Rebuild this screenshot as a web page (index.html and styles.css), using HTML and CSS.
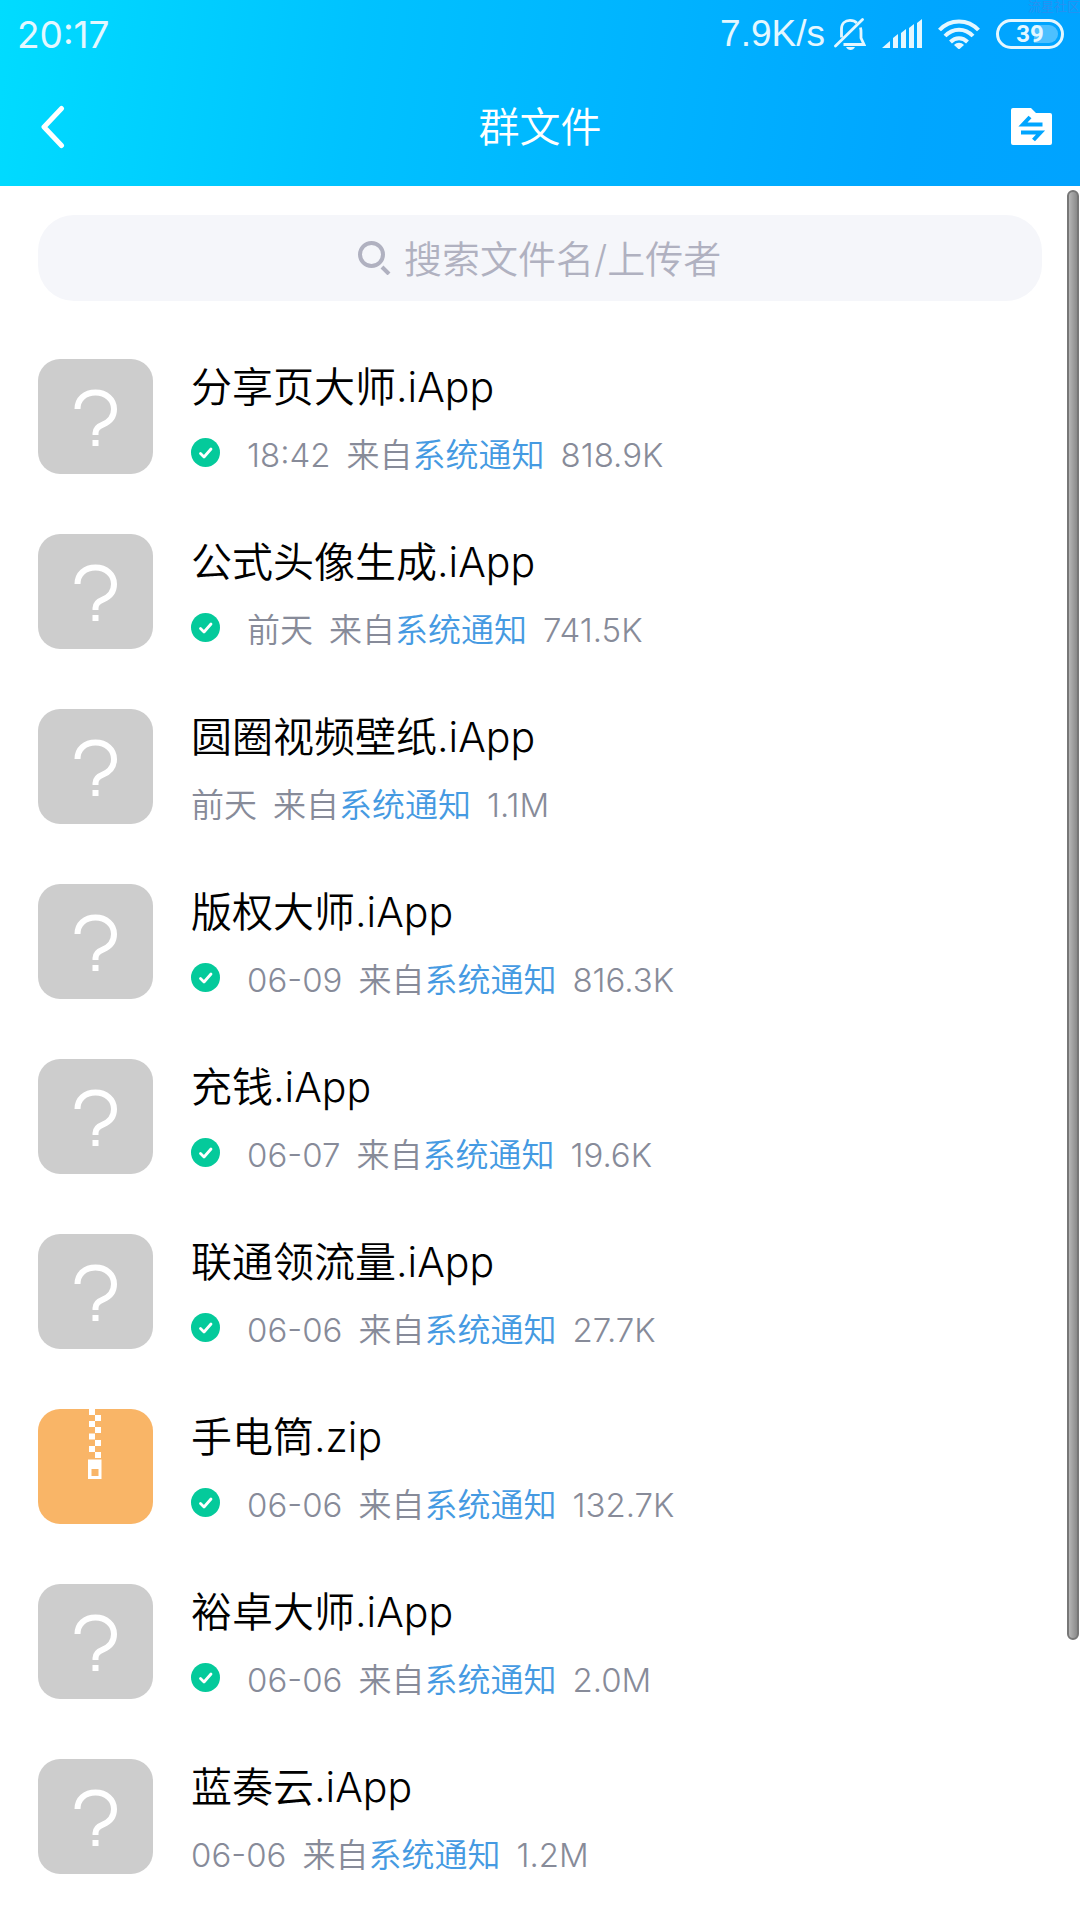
FILE: index.html
```html
<!DOCTYPE html>
<html lang="zh-CN">
<head>
<meta charset="utf-8">
<meta name="viewport" content="width=device-width, initial-scale=1">
<title>群文件</title>
<link rel="stylesheet" href="styles.css">
</head>
<body>
<svg class="defs" aria-hidden="true">
  <symbol id="unknown" viewBox="0 0 115 115">
    <path d="M39.500 50C39.500 40 47 33.500 57.500 33.500S76 40.500 76 50C76 58 71 63 65 65.500C60 67.500 57.500 70 57.500 74V76" fill="none" stroke="#fff" stroke-width="6"/>
    <path d="M54.500 81h6v6h-6z" fill="#fff"/>
  </symbol>
  <symbol id="zip" viewBox="0 0 115 115">
    <path fill="#fff" fill-rule="evenodd" d="M51 0h6v6h-6zM57 6h6v6h-6zM51 12h6v6h-6zM57 18h6v6h-6zM51 24.500h6v6h-6zM57 31h6v6h-6zM51 37h6v6h-6zM57 43h6v6h-6zM50 50.500h13.500V70H50zM53.500 60v7h7v-7z"/>
  </symbol>
  <symbol id="check" viewBox="0 0 29 29">
    <circle cx="14.500" cy="14.500" r="14.500" fill="#04ca9b"/>
    <path d="M9.500 15.500l3.500 3.500 7-8" fill="none" stroke="#fff" stroke-width="2.800" stroke-linecap="round" stroke-linejoin="round"/>
  </symbol>
</svg>

<header class="header">
  <div class="status">
    <span class="clock">20:17</span>
    <div class="indicators">
      <span class="speed">7.9K/s</span>
      <svg class="mute" viewBox="0 0 32 32" fill="none" stroke="currentColor" stroke-width="2.800">
        <path d="M7.500 19.500V11C7.500 5.500 11 2.400 16 2.400c3 0 5.400 1 6.800 2.600M26.500 9.500c.4 1.500.5 3 .5 5V20l3 6.500H9.500"/>
        <path d="M1.500 28L28.500 1.500" stroke-linecap="round"/>
        <path d="M12 29h9c-1 2-2.500 3-4.500 3S13 31 12 29z" fill="currentColor" stroke="none"/>
      </svg>
      <svg class="signal" viewBox="0 0 41 30" fill="currentColor">
        <path d="M0 29l8-7v7zM11 19l5-4v14h-5zM19 14l5-4v19h-5zM27 9l5-4v24h-5zM35 4l5-4v29h-5z"/>
      </svg>
      <svg class="wifi" viewBox="0 0 42 30" fill="none" stroke="currentColor" stroke-width="4">
        <path d="M1.500 11C12-.5 30-.5 40.500 11M7 17c8-8.500 20-8.500 28 0M12.500 23c5-5 12-5 17 0"/>
        <path d="M16 26c3-3 7-3 10 0l-5 4.500z" fill="currentColor" stroke="none"/>
      </svg>
      <span class="battery">39</span>
    </div>
  </div>
  <nav class="nav">
    <button class="nav-button" type="button" aria-label="返回">
      <svg class="back" viewBox="0 0 24 44"><path d="M20.500 3.500L3 22l17.500 18.500" fill="none" stroke="currentColor" stroke-width="5" stroke-linecap="round" stroke-linejoin="round"/></svg>
    </button>
    <h1 class="title">群文件</h1>
    <button class="nav-button nav-button-end" type="button" aria-label="传输列表">
      <svg class="transfer" viewBox="0 0 41 38">
        <path d="M2 0h18l5 5h14a2 2 0 0 1 2 2v28a2 2 0 0 1-2 2H2a2 2 0 0 1-2-2V2a2 2 0 0 1 2-2z" fill="currentColor"/>
        <path d="M31.500 16.500H12l7-7.500M10 24.500h19.500l-7 7.500" fill="none" stroke="#00a5ff" stroke-width="4"/>
      </svg>
    </button>
  </nav>
  <span class="watermark">流星社区</span>
</header>

<main class="content">
  <label class="search">
    <svg class="search-icon" viewBox="0 0 33 34" fill="none" stroke="currentColor" stroke-width="4"><circle cx="13.500" cy="13.500" r="11.500"/><path d="M24 26l7 7"/></svg>
    <input class="search-input" type="text" placeholder="搜索文件名/上传者" aria-label="搜索文件名/上传者">
  </label>

  <ul class="files">
    <li class="file">
      <svg class="thumb"><use href="#unknown"/></svg>
      <div class="info">
        <a class="name" href="#">分享页大师.iApp</a>
        <div class="meta"><svg class="check"><use href="#check"/></svg><span>18:42</span><span>来自<a href="#">系统通知</a></span><span>818.9K</span></div>
      </div>
    </li>
    <li class="file">
      <svg class="thumb"><use href="#unknown"/></svg>
      <div class="info">
        <a class="name" href="#">公式头像生成.iApp</a>
        <div class="meta"><svg class="check"><use href="#check"/></svg><span>前天</span><span>来自<a href="#">系统通知</a></span><span>741.5K</span></div>
      </div>
    </li>
    <li class="file">
      <svg class="thumb"><use href="#unknown"/></svg>
      <div class="info">
        <a class="name" href="#">圆圈视频壁纸.iApp</a>
        <div class="meta"><span>前天</span><span>来自<a href="#">系统通知</a></span><span>1.1M</span></div>
      </div>
    </li>
    <li class="file">
      <svg class="thumb"><use href="#unknown"/></svg>
      <div class="info">
        <a class="name" href="#">版权大师.iApp</a>
        <div class="meta"><svg class="check"><use href="#check"/></svg><span>06-09</span><span>来自<a href="#">系统通知</a></span><span>816.3K</span></div>
      </div>
    </li>
    <li class="file">
      <svg class="thumb"><use href="#unknown"/></svg>
      <div class="info">
        <a class="name" href="#">充钱.iApp</a>
        <div class="meta"><svg class="check"><use href="#check"/></svg><span>06-07</span><span>来自<a href="#">系统通知</a></span><span>19.6K</span></div>
      </div>
    </li>
    <li class="file">
      <svg class="thumb"><use href="#unknown"/></svg>
      <div class="info">
        <a class="name" href="#">联通领流量.iApp</a>
        <div class="meta"><svg class="check"><use href="#check"/></svg><span>06-06</span><span>来自<a href="#">系统通知</a></span><span>27.7K</span></div>
      </div>
    </li>
    <li class="file">
      <svg class="thumb thumb-zip"><use href="#zip"/></svg>
      <div class="info">
        <a class="name" href="#">手电筒.zip</a>
        <div class="meta"><svg class="check"><use href="#check"/></svg><span>06-06</span><span>来自<a href="#">系统通知</a></span><span>132.7K</span></div>
      </div>
    </li>
    <li class="file">
      <svg class="thumb"><use href="#unknown"/></svg>
      <div class="info">
        <a class="name" href="#">裕卓大师.iApp</a>
        <div class="meta"><svg class="check"><use href="#check"/></svg><span>06-06</span><span>来自<a href="#">系统通知</a></span><span>2.0M</span></div>
      </div>
    </li>
    <li class="file">
      <svg class="thumb"><use href="#unknown"/></svg>
      <div class="info">
        <a class="name" href="#">蓝奏云.iApp</a>
        <div class="meta"><span>06-06</span><span>来自<a href="#">系统通知</a></span><span>1.2M</span></div>
      </div>
    </li>
  </ul>
</main>
<div class="scroll-thumb" aria-hidden="true"></div>
</body>
</html>
```
FILE: styles.css
```css
* { box-sizing: border-box; }
body {
  margin: 0;
  min-height: 100vh;
  position: relative;
  background: #fff;
  color: #000;
  font-family: Inter, "Noto Sans CJK SC", sans-serif;
  font-weight: 350;
}
a { color: inherit; text-decoration: none; }
.defs { display: none; }

.header {
  position: relative;
  color: #fff;
  background: linear-gradient(98deg, #00dcff 0%, #00c2ff 33%, #00b2ff 62%, #00a6ff 84%, #00a3ff 100%);
}
.status {
  display: flex;
  align-items: center;
  justify-content: space-between;
  height: 68px;
  padding: 0 16px 0 17px;
  color: #e4f7ff;
  font-size: 37px;
  font-weight: 400;
}
.indicators { display: flex; align-items: center; }
.speed { font-family: "Liberation Sans", sans-serif; margin-right: 9px; }
.mute { width: 32px; height: 32px; margin-right: 16px; }
.signal { width: 41px; height: 30px; margin-right: 15px; }
.wifi { width: 42px; height: 30px; margin-right: 16px; }
.battery {
  width: 68px;
  height: 30px;
  border: 3px solid currentColor;
  border-radius: 15px;
  background: linear-gradient(90deg, transparent 32px, #4dc0ff 32px) content-box;
  padding: 3px;
  text-align: center;
  font-family: Roboto, sans-serif;
  font-size: 24px;
  line-height: 18px;
  font-weight: 700;
}
.nav {
  display: flex;
  align-items: center;
  justify-content: space-between;
  height: 118px;
  padding: 0 28px;
}
.nav-button {
  display: flex;
  width: 54px;
  padding: 0 0 0 13px;
  border: 0;
  background: none;
  color: inherit;
}
.back { width: 24px; height: 44px; }
.transfer { width: 41px; height: 38px; }
.title { margin: 0; font-size: 41px; line-height: 56px; font-weight: inherit; }
.watermark {
  position: absolute;
  top: 0;
  right: 0;
  color: #2b8ff0;
  font-size: 13px;
  line-height: 13px;
}

.content { padding: 29px 38px 46px; }
.search {
  display: flex;
  align-items: center;
  justify-content: center;
  gap: 13px;
  height: 86px;
  border-radius: 36px;
  background: #f5f6fa;
  color: #b0b1c0;
}
.search-icon { width: 33px; height: 34px; }
.search-input {
  width: 318px;
  padding: 2px 0 0;
  border: 0;
  outline: 0;
  background: none;
  color: inherit;
  font: inherit;
  font-size: 38px;
}
.search-input::placeholder { color: inherit; opacity: 1; }

.files {
  display: grid;
  gap: 60px;
  margin: 58px 0 0;
  padding: 0;
  list-style: none;
}
.file { display: flex; gap: 38px; }
.thumb {
  flex: none;
  width: 115px;
  height: 115px;
  border-radius: 22px;
  background: #cdcdcd;
}
.thumb-zip { background: #f9b567; }
.info { display: flex; flex-direction: column; gap: 22px; }
.name { font-size: 41px; line-height: 56px; }
.meta {
  display: flex;
  gap: 16px;
  color: #878b99;
  font-size: 33px;
  line-height: 37px;
}
.meta a { color: #459ae2; }
.check { width: 29px; height: 29px; margin: 1px 11px 0 0; }

.scroll-thumb {
  position: absolute;
  top: 190px;
  right: 1px;
  bottom: 280px;
  width: 12px;
  border: 2px solid #777;
  border-radius: 7px;
  background: linear-gradient(90deg, #b5b5b5, #8a8a8a);
}
```
